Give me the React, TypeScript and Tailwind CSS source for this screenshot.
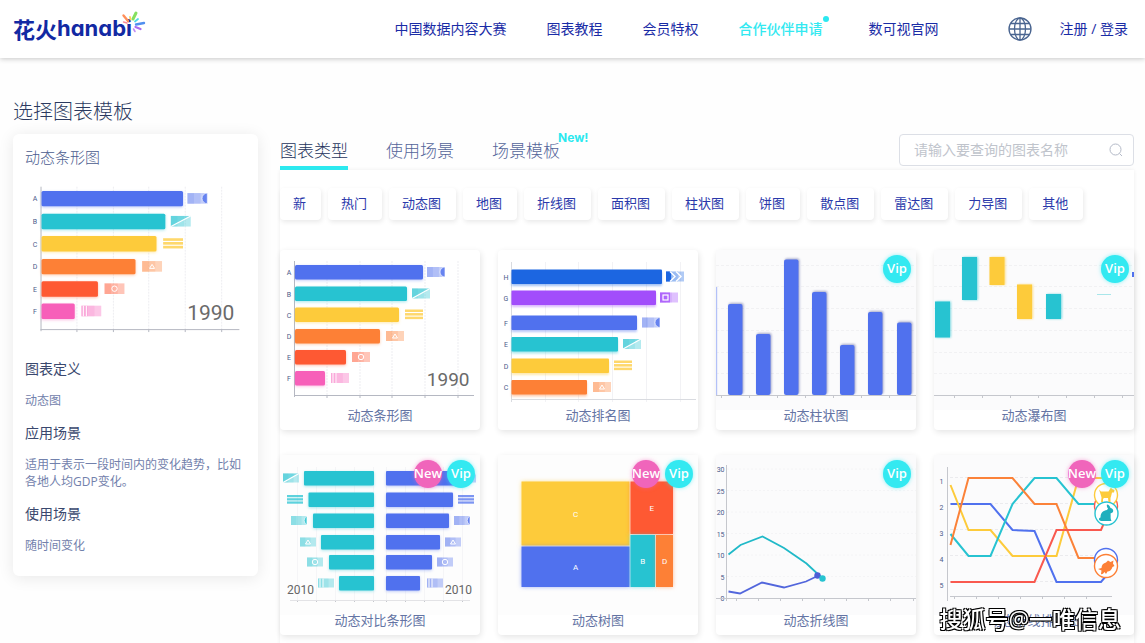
import React, { useState } from "react";

const BLUE = "#5071ee";
const TEAL = "#27c3d1";
const YELLOW = "#fdcb3b";
const ORANGE = "#fd8036";
const RED = "#fe5933";
const PINK = "#f75fb9";

type FlagKind = "moon" | "slash" | "lines" | "triangle" | "circle" | "stripes" | "chevrons" | "square";

interface FlagProps {
  x: number;
  y: number;
  kind: FlagKind;
  color: string;
  w?: number;
  h?: number;
}

// Small gradient flag shown at the end of a bar, centred vertically on y
const Flag: React.FC<FlagProps> = ({ x, y, kind, color, w = 18, h = 10 }) => {
  const top = y - h / 2;
  const cx = x + w / 2;
  return (
    <g>
      {kind !== "lines" && (
        <>
          <rect x={x} y={top} width={w} height={h} fill={color} opacity={0.35} />
          <rect x={x} y={top} width={w * 0.66} height={h} fill={color} opacity={0.15} />
          <rect x={x} y={top} width={w * 0.33} height={h} fill={color} opacity={0.15} />
        </>
      )}
      {kind === "lines" &&
        [0, 1, 2].map((i) => (
          <rect key={i} x={x} y={top + (i * h) / 2.8} width={w} height={h / 4} fill={color} opacity={0.75} />
        ))}
      {kind === "moon" && (
        <path d={`M${x + w} ${top}a5 5 0 0 0 0 ${h}z`} fill={color} stroke="#fff" strokeWidth={0.7} opacity={0.8} />
      )}
      {kind === "slash" && (
        <>
          <path d={`M${x} ${top + h}V${top}H${x + w}z`} fill={color} opacity={0.4} />
          <path d={`M${x} ${top + h}L${x + w} ${top}`} stroke="#fff" strokeWidth={1.2} />
        </>
      )}
      {kind === "triangle" && (
        <path d={`M${cx} ${y - 2}l2.5 4h-5z`} fill="none" stroke="#fff" strokeWidth={1} />
      )}
      {kind === "circle" && <circle cx={cx} cy={y} r={2.7} fill="none" stroke="#fff" strokeWidth={1} />}
      {kind === "stripes" && (
        <path d={`M${x + 2} ${top}v${h}M${x + 5} ${top}v${h}`} stroke="#fff" strokeWidth={1} />
      )}
      {kind === "chevrons" && (
        <>
          <rect x={x} y={top} width={5} height={h} fill={color} />
          <path
            d={`M${x + 4} ${top}l5 ${h / 2}l-5 ${h / 2}M${x + 10} ${top}l5 ${h / 2}l-5 ${h / 2}`}
            fill="none"
            stroke="#fff"
            strokeWidth={1.4}
          />
        </>
      )}
      {kind === "square" && (
        <>
          <rect x={x} y={top} width={10} height={h} fill={color} opacity={0.7} />
          <rect x={x + 3} y={y - 2.5} width={5} height={5} fill="none" stroke="#fff" strokeWidth={1.2} />
        </>
      )}
    </g>
  );
};

interface Bar {
  label: string;
  y: number;
  end: number;
  flag: number;
  color: string;
  kind: FlagKind;
}

const raceBars: Bar[] = [
  { label: "A", y: 15, end: 143, flag: 147, color: BLUE, kind: "moon" },
  { label: "B", y: 36.5, end: 127, flag: 132, color: TEAL, kind: "slash" },
  { label: "C", y: 57.5, end: 119, flag: 125, color: YELLOW, kind: "lines" },
  { label: "D", y: 79, end: 100, flag: 106, color: ORANGE, kind: "triangle" },
  { label: "E", y: 100, end: 66, flag: 72, color: RED, kind: "circle" },
  { label: "F", y: 121, end: 45, flag: 51, color: PINK, kind: "stripes" },
];

const rankBars: Bar[] = [
  { label: "H", y: 19.5, end: 164, flag: 168, color: "#1c66e1", kind: "chevrons" },
  { label: "G", y: 40.5, end: 158, flag: 162, color: "#a24dfb", kind: "square" },
  { label: "F", y: 65.5, end: 139, flag: 144, color: BLUE, kind: "moon" },
  { label: "E", y: 87, end: 120, flag: 125, color: TEAL, kind: "slash" },
  { label: "D", y: 108.5, end: 111, flag: 116, color: YELLOW, kind: "lines" },
  { label: "C", y: 130, end: 89, flag: 95, color: ORANGE, kind: "triangle" },
];

const BarRace: React.FC<{ width?: number; height?: number }> = ({ width = 200, height = 160 }) => {
  const sx = width / 200;
  const sy = height / 160;
  return (
    <svg viewBox={`0 0 ${width} ${height}`} className="block w-full">
      {[47, 80, 112, 145, 178].map((x) => (
        <g key={x}>
          <path d={`M${x * sx} ${11 * sy}V${145 * sy}`} stroke="#ededf1" strokeDasharray="2 1" />
          <path d={`M${x * sx} ${145 * sy}v3`} stroke="#b5b8c2" />
        </g>
      ))}
      <path d={`M${14.5 * sx} ${11 * sy}V${147 * sy}M${14 * sx} ${145.5 * sy}H${194 * sx}`} stroke="#b5b8c2" />
      {raceBars.map((b) => (
        <g key={b.label}>
          <text
            x={9 * sx}
            y={(b.y + 7) * sy + 3}
            textAnchor="middle"
            fontSize={7}
            fill="#4a5a8a"
            fontWeight={400}
            fontFamily="Roboto, sans-serif"
          >
            {b.label}
          </text>
          <rect
            x={15 * sx}
            y={b.y * sy}
            width={(b.end - 15) * sx}
            height={14.5 * sy}
            rx={1.5}
            fill={b.color}
            style={{ filter: `drop-shadow(0 1px 1.5px ${b.color}66)` }}
          />
          <Flag x={b.flag * sx} y={(b.y + 7) * sy} w={18 * sx} h={10 * sy} kind={b.kind} color={b.color} />
        </g>
      ))}
      <text
        x={189.5 * sx}
        y={136 * sy}
        textAnchor="end"
        fontSize={width > 200 ? 21 : 19}
        fontWeight={400}
        fill="#6a6a6a"
        fontFamily="Roboto, sans-serif"
      >
        1990
      </text>
    </svg>
  );
};

const Ranking: React.FC = () => (
  <svg viewBox="0 0 200 160" className="block w-full">
    {[47, 80, 114, 148, 182].map((x) => (
      <path key={x} d={`M${x + 0.5} 12v140`} stroke="#f2f2f5" />
    ))}
    <path d="M13.5 12v140M13 149.5h185" stroke="#d9dbe0" />
    {rankBars.map((b) => (
      <g key={b.label}>
        <text
          x={8}
          y={b.y + 10}
          textAnchor="middle"
          fontSize={7}
          fontWeight={400}
          fill="#4a5a8a"
          fontFamily="Roboto, sans-serif"
        >
          {b.label}
        </text>
        <rect
          x={13.5}
          y={b.y}
          width={b.end - 13.5}
          height={14.5}
          rx={1}
          fill={b.color}
          style={{ filter: `drop-shadow(0 2px 1px ${b.color}66)` }}
        />
        <Flag x={b.flag} y={b.y + 7} kind={b.kind} color={b.color} />
      </g>
    ))}
  </svg>
);

const gridRows = [15.5, 36.5, 58.5, 80.5, 102.5, 123.5];

const ColumnChart: React.FC = () => (
  <svg viewBox="0 0 200 160" className="block w-full bg-[#fbfbfc]">
    {gridRows.map((y) => (
      <path key={y} d={`M0 ${y}h200`} stroke="#f1f1f3" strokeDasharray="3 2" />
    ))}
    <rect x={0} y={37} width={1.2} height={108} fill="#b3c1f8" />
    {[
      [12, 54],
      [40, 84],
      [68, 9.5],
      [96, 42],
      [124, 95],
      [152, 62],
      [181, 72.5],
    ].map(([x, y]) => (
      <rect
        key={x}
        x={x}
        y={y}
        width={14.5}
        height={145 - y}
        rx={2}
        fill={BLUE}
        style={{ filter: "drop-shadow(1px -1px 1px #5a62a088)" }}
      />
    ))}
    <path d="M0 145.5h200" stroke="#c5c7cd" />
    {[5, 33, 61, 89, 117, 145, 173].map((x) => (
      <path key={x} d={`M${x + 0.5} 145v3`} stroke="#c5c7cd" />
    ))}
  </svg>
);

const Waterfall: React.FC = () => (
  <svg viewBox="0 0 200 160" className="block w-full bg-[#fbfbfc]">
    {gridRows.map((y) => (
      <path key={y} d={`M0 ${y}h200`} stroke="#f1f1f3" strokeDasharray="3 2" />
    ))}
    {[
      { x: 1, y: 51.5, h: 36, color: TEAL },
      { x: 28, y: 7, h: 43, color: TEAL },
      { x: 55.5, y: 7, h: 28, color: YELLOW },
      { x: 83, y: 34.5, h: 34.5, color: YELLOW },
      { x: 112, y: 44, h: 25, color: TEAL },
    ].map((r) => (
      <rect
        key={r.x}
        x={r.x}
        y={r.y}
        width={15}
        height={r.h}
        fill={r.color}
        style={{ filter: `drop-shadow(1px 0 1px ${r.color}99)` }}
      />
    ))}
    <path d="M163 44.5h14" stroke="#a8e6ea" />
    <rect x={198} y={22} width={2} height={5} fill={BLUE} />
    <path d="M0 145.5h200" stroke="#c5c7cd" />
    {[20, 48, 76, 104, 132, 160, 188].map((x) => (
      <path key={x} d={`M${x + 0.5} 145v3`} stroke="#c5c7cd" />
    ))}
  </svg>
);

const compareRows: { y: number; left: number; right: number; lf: number; rf: number; kind: FlagKind }[] = [
  { y: 16, left: 24, right: 175, lf: 3, rf: 180, kind: "slash" },
  { y: 37.5, left: 28.5, right: 173, lf: 7, rf: 178, kind: "lines" },
  { y: 58.5, left: 33, right: 169, lf: 11, rf: 174, kind: "moon" },
  { y: 80, left: 41, right: 160, lf: 20, rf: 165, kind: "triangle" },
  { y: 100, left: 49, right: 152, lf: 27, rf: 157, kind: "circle" },
  { y: 121, left: 59, right: 140, lf: 38, rf: 147, kind: "stripes" },
];

const CompareBars: React.FC = () => (
  <svg viewBox="0 0 200 160" className="block w-full bg-[#fdfdfd]">
    {[17, 36, 55, 74, 93, 106, 125, 144, 163, 182].map((x) => (
      <g key={x}>
        <path d={`M${x + 0.5} 12v133`} stroke="#f5f5f7" />
        <path d={`M${x + 0.5} 145v2`} stroke="#c5c7cd" />
      </g>
    ))}
    <path d="M10 145.5h180" stroke="#e3e3e6" />
    {compareRows.map((r) => (
      <g key={r.y}>
        <rect
          x={r.left}
          y={r.y}
          width={94 - r.left}
          height={14.5}
          rx={1}
          fill={TEAL}
          style={{ filter: "drop-shadow(0 1px 1.5px #27c3d166)" }}
        />
        <rect
          x={106}
          y={r.y}
          width={r.right - 106}
          height={14.5}
          rx={1}
          fill={BLUE}
          style={{ filter: "drop-shadow(0 1px 1.5px #5071ee66)" }}
        />
        <Flag x={r.lf} y={r.y + 7} w={16} h={9} kind={r.kind} color={TEAL} />
        <Flag x={r.rf} y={r.y + 7} w={16} h={9} kind={r.kind} color={BLUE} />
      </g>
    ))}
    <g fontSize={12} fontWeight={400} fill="#666" fontFamily="Roboto, sans-serif">
      <text x={7} y={139}>
        2010
      </text>
      <text x={165} y={139}>
        2010
      </text>
    </g>
  </svg>
);

const TreeMap: React.FC = () => (
  <svg viewBox="0 0 200 160" className="block w-full bg-[#fdfdfd]">
    {[
      { label: "C", x: 23.5, y: 26.5, w: 108, h: 64, color: YELLOW },
      { label: "A", x: 23.5, y: 91.5, w: 108, h: 40.5, color: BLUE },
      { label: "E", x: 132.5, y: 26.5, w: 42.5, h: 52.5, color: RED },
      { label: "B", x: 132.5, y: 80, w: 24.5, h: 52, color: TEAL },
      { label: "D", x: 158, y: 80, w: 17, h: 52, color: ORANGE },
    ].map((c) => (
      <g key={c.label}>
        <rect
          x={c.x}
          y={c.y}
          width={c.w}
          height={c.h}
          fill={c.color}
          style={{ filter: `drop-shadow(0 0 2px ${c.color}88)` }}
        />
        <text
          x={c.x + c.w / 2}
          y={c.y + c.h / 2 + 3}
          textAnchor="middle"
          fontSize={8}
          fontWeight={400}
          fill="#fff"
          fontFamily="Roboto, sans-serif"
        >
          {c.label}
        </text>
      </g>
    ))}
  </svg>
);

const LineChart: React.FC = () => (
  <svg viewBox="0 0 200 160" className="block w-full bg-[#fbfbfc]">
    {[30, 25, 20, 15, 10, 5, 0].map((v, i) => {
      const y = 14 + i * 21.5;
      return (
        <g key={v}>
          <text
            x={8.5}
            y={y + 3}
            textAnchor="end"
            fontSize={7}
            fontWeight={400}
            fill="#4a5a8a"
            fontFamily="Roboto, sans-serif"
          >
            {v}
          </text>
          {v > 0 && <path d={`M11 ${y}h189`} stroke="#f4f4f6" strokeDasharray="2 2" />}
        </g>
      );
    })}
    <path d="M10.5 10v136M0 143.5h200" stroke="#c5c7cd" />
    {[20, 42, 64, 86, 108, 130, 152, 174, 197].map((x) => (
      <path key={x} d={`M${x + 0.5} 143v3`} stroke="#c5c7cd" />
    ))}
    <path
      d="M12.5 136.5L24 138.5L46 127.5L68 132.5L90 126.5L101.5 121"
      fill="none"
      stroke="#5266dc"
      strokeWidth={1.8}
    />
    <path d="M12.5 99.5L24.5 90L46.5 81.5L68 93L90.5 108.5L106 123" fill="none" stroke="#20b9c8" strokeWidth={1.8} />
    <circle cx={101.5} cy={120.5} r={3.2} fill="#4d5fd6" />
    <circle cx={106.5} cy={123.5} r={3.2} fill={TEAL} />
  </svg>
);

const LineRank: React.FC = () => (
  <svg viewBox="0 0 200 160" className="block w-full bg-[#fbfbfc]">
    {[1, 2, 3, 4, 5].map((n) => (
      <g key={n}>
        <path d={`M16 ${-3.5 + n * 26}h150`} stroke="#ebebee" strokeDasharray="3 2" />
        <text
          x={7.5}
          y={2.5 + n * 26}
          textAnchor="middle"
          fontSize={7}
          fontWeight={400}
          fill="#4a5a8a"
          fontFamily="Roboto, sans-serif"
        >
          {n}
        </text>
      </g>
    ))}
    <path d="M13.5 12v134M16 141.5h162" stroke="#c5c7cd" />
    {[20, 42, 64, 86, 108, 130, 152].map((x) => (
      <path key={x} d={`M${x + 0.5} 141v3`} stroke="#c5c7cd" />
    ))}
    <g fill="none" strokeWidth={2}>
      <path d="M16.5 49H56.5L78.5 75L100.5 76L122.5 127H167L172 121" stroke={BLUE} />
      <path d="M16.5 30L34.5 75H56.5L78.5 101H122.5L144.5 23H172" stroke={YELLOW} />
      <path d="M16.5 79L34.5 101H56.5L78.5 49L100.5 23H122.5L144.5 49H162" stroke={TEAL} />
      <path d="M16.5 90L34.5 23H78.5L100.5 49H122.5L144.5 103H162" stroke="#fb8239" />
      <path d="M16.5 127H100.5L122.5 75H167L170 68" stroke="#f9594f" />
    </g>
    <g fill="#fff" strokeWidth={1.4}>
      <circle cx={172} cy={51} r={11.5} stroke="#f9594f" />
      <circle cx={172} cy={40} r={11.5} stroke={YELLOW} />
      <circle cx={172.5} cy={58.5} r={11.5} stroke={TEAL} />
      <circle cx={172} cy={105} r={11.5} stroke={BLUE} />
      <circle cx={172} cy={111} r={11.5} stroke={ORANGE} />
    </g>
    {/* dog */}
    <path
      d="M165 34.5l2 2h7.500l1.500-2.500 1-1.500 1 1.500 2.500 1-.5 2.500h-2l-1 4-.5 1.500v4h-2l-.5-4h-4l-1 1v3H167l.5-4.500-1-3.500z"
      fill={YELLOW}
    />
    {/* rabbit */}
    <path
      d="M173 49.500c2 0 3 2 3.500 3.500 2.500.5 3.500 2.500 2 4.500l-2 1c.5 3-.5 4.500 1 7.500H167.500c-3.500-.5-3-3-1-3.500 0-5 3-7 6.500-7.500l1-1.500c-1-1-1.500-2.500-1-4z"
      fill="#20afbd"
    />
    {/* fish */}
    <path
      d="M164 114l3.500-1c0-3 2-5 4.500-5.500l2-2 2.500 1.500 3-1.500-.5 3 1.500 2.500-2 1c-1 3-3 4.500-5 4.500l-1.500 2.500-1.500-2c-1.500 2-2.500 2.500-3.500 2l.5-3.500z"
      fill={ORANGE}
    />
  </svg>
);

const Logo: React.FC = () => (
  <a href="#home" aria-label="花火hanabi" className="relative flex h-12 items-center text-[#1229a3]">
    <span className="font-['Noto_Sans_CJK_SC',sans-serif] text-[22px] font-bold">花火</span>
    <span className="font-['Inter',sans-serif] text-[22px] font-bold [font-feature-settings:'cv11']">hanabi</span>
    <svg viewBox="0 0 28 28" className="absolute right-[-14px] top-1 h-7 w-7">
      <g strokeLinecap="round" fill="none">
        <path d="M10 12L5.500 6.500" stroke="#ff8f5a" strokeWidth={2.400} />
        <path d="M12.500 10.500L12 8" stroke="#ffd35a" strokeWidth={1.800} />
        <path d="M15 10L18 4" stroke="#86e05f" strokeWidth={3} />
        <path d="M17 12.500L20 10" stroke="#4fd9e6" strokeWidth={1.800} />
        <path d="M18 15.500L26 14" stroke="#4f8ff0" strokeWidth={2.400} />
        <path d="M17.500 18L22.500 20" stroke="#a96bf0" strokeWidth={2.200} />
        <path d="M15.500 20L17 22.500" stroke="#c08bf3" strokeWidth={1.600} />
        <path d="M9 14L5.500 13" stroke="#f98a9a" strokeWidth={1.400} />
      </g>
    </svg>
  </a>
);

const GlobeIcon: React.FC = () => (
  <svg viewBox="0 0 24 24" className="h-6 w-6" fill="none" stroke="#4a6590" strokeWidth={1.3}>
    <circle cx={12} cy={12} r={11} />
    <ellipse cx={12} cy={12} rx={5.500} ry={11} />
    <path d="M12 1v22M1 12h22M3 6.500h18M3 17.500h18" />
  </svg>
);

const navLinks = ["中国数据内容大赛", "图表教程", "会员特权", "合作伙伴申请", "数可视官网"];

const tabs = ["图表类型", "使用场景", "场景模板"];

const filters = ["新", "热门", "动态图", "地图", "折线图", "面积图", "柱状图", "饼图", "散点图", "雷达图", "力导图", "其他"];

const templates = [
  { name: "动态条形图", chart: <BarRace />, isNew: false, vip: false },
  { name: "动态排名图", chart: <Ranking />, isNew: false, vip: false },
  { name: "动态柱状图", chart: <ColumnChart />, isNew: false, vip: true },
  { name: "动态瀑布图", chart: <Waterfall />, isNew: false, vip: true },
  { name: "动态对比条形图", chart: <CompareBars />, isNew: true, vip: true },
  { name: "动态树图", chart: <TreeMap />, isNew: true, vip: true },
  { name: "动态折线图", chart: <LineChart />, isNew: false, vip: true },
  { name: "动态折线排名图", chart: <LineRank />, isNew: true, vip: true },
];

const details = [
  { title: "图表定义", text: "动态图" },
  { title: "应用场景", text: "适用于表示一段时间内的变化趋势，比如各地人均GDP变化。" },
  { title: "使用场景", text: "随时间变化" },
];

const App: React.FC = () => {
  const [activeTab, setActiveTab] = useState(tabs[0]);
  const [query, setQuery] = useState("");

  return (
    <div className="relative min-h-screen overflow-hidden bg-[#fefefe] font-['Open_Sans','Noto_Sans_CJK_SC',sans-serif] font-light">
      {/* Header */}
      <header className="flex h-[58px] items-center bg-white pl-[13px] pr-[17px] text-sm font-normal text-[#1a2ca6] shadow-[0_1px_5px_rgba(0,0,0,0.22)]">
        <Logo />
        <nav className="ml-auto flex gap-10 whitespace-nowrap">
          {navLinks.map((link) =>
            link === "合作伙伴申请" ? (
              <a key={link} href="#partner" className="relative pr-1.5 font-medium text-[#33e9f1]">
                {link}
                <span className="absolute right-0 top-[-3px] h-1.5 w-1.5 rounded-full bg-[#2be8f0]"></span>
              </a>
            ) : (
              <a key={link} href="#nav">
                {link}
              </a>
            )
          )}
        </nav>
        <button type="button" aria-label="语言" className="ml-[69px]">
          <GlobeIcon />
        </button>
        <a href="#login" className="ml-7 whitespace-nowrap">
          注册 / 登录
        </a>
      </header>

      <main className="pl-[13px] pr-[11px] pt-10">
        <h1 className="mb-2 text-xl leading-7 text-[#2b3a60]">选择图表模板</h1>

        <div className="flex items-start gap-[22px]">
          {/* Selected template */}
          <aside className="w-[245px] shrink-0 rounded-md bg-white px-3 pb-[22px] pt-3 shadow-[0_2px_16px_rgba(0,0,0,0.09)]">
            <h2 className="mb-[7px] text-[15px] leading-[22px] text-[#4a5b8e]">动态条形图</h2>
            <BarRace width={221} height={170} />
            {details.map((d) => (
              <section key={d.title} className="mt-3.5 font-normal">
                <h3 className="text-sm leading-5 text-[#3a486e]">{d.title}</h3>
                <p className="mt-[13px] text-xs leading-[17px] text-[#7281ac]">{d.text}</p>
              </section>
            ))}
          </aside>

          {/* Template browser */}
          <section className="min-w-0 flex-1">
            <div className="flex h-9 items-start">
              <div role="tablist" className="flex h-9 gap-[38px]">
                {tabs.map((tab) => (
                  <button
                    key={tab}
                    type="button"
                    role="tab"
                    aria-selected={activeTab === tab}
                    onClick={() => setActiveTab(tab)}
                    className={`relative h-9 border-b-4 pt-0.5 text-[17px] ${
                      activeTab === tab ? "border-[#2ce9ef] text-[#25345c]" : "border-transparent text-[#54659a]"
                    }`}
                  >
                    {tab}
                    {tab === "场景模板" && (
                      <span className="absolute left-[66px] top-[-4px] font-['Inter',sans-serif] text-xs font-bold text-[#2ce9ef]">
                        New!
                      </span>
                    )}
                  </button>
                ))}
              </div>
              <div className="ml-auto flex h-8 w-[235px] items-center rounded border border-[#dcdfe6] bg-white pl-3.5 pr-2.5">
                <input
                  type="text"
                  aria-label="搜索图表"
                  value={query}
                  onChange={(e) => setQuery(e.target.value)}
                  placeholder="请输入要查询的图表名称"
                  className="min-w-0 flex-1 text-sm font-normal text-[#34446a] outline-none placeholder:text-[#c0c4cc]"
                />
                <svg viewBox="0 0 14 14" className="h-3.5 w-3.5" fill="none" stroke="#b4bac8">
                  <circle cx={6.500} cy={6.500} r={5.500} />
                  <path d="M10.500 10.500l2.500 2.500" />
                </svg>
              </div>
            </div>

            <div className="bg-white pb-10 pt-[18px] shadow-[0_0_4px_rgba(0,0,0,0.07)]">
              <div className="flex flex-wrap gap-[7px]">
                {filters.map((f) => (
                  <button
                    key={f}
                    type="button"
                    className="h-8 rounded bg-white pl-[13px] pr-[15px] text-[13px] font-normal text-[#2a39ab] shadow-[1px_2px_5px_rgba(0,0,0,0.09)]"
                  >
                    {f}
                  </button>
                ))}
              </div>

              <div className="mt-[30px] grid grid-cols-4 gap-x-[18px] gap-y-[25px]">
                {templates.map((t) => (
                  <a
                    key={t.name}
                    href="#template"
                    className="relative block rounded bg-white shadow-[1px_2px_6px_rgba(0,0,0,0.11)]"
                  >
                    {t.chart}
                    <span className="block h-5 text-center text-[13px] leading-[11px] font-normal text-[#6474a4]">
                      {t.name}
                    </span>
                    {(t.isNew || t.vip) && (
                      <span className="absolute right-[5px] top-[5px] flex gap-[5px] text-[13px] font-semibold text-white">
                        {t.isNew && (
                          <span className="flex h-7 w-7 items-center justify-center rounded-full bg-[#f065bb] shadow-[0_0_4px_#f065bb88]">
                            New
                          </span>
                        )}
                        {t.vip && (
                          <span className="flex h-7 w-7 items-center justify-center rounded-full bg-[#33e9f1] shadow-[0_0_4px_#33e9f188]">
                            Vip
                          </span>
                        )}
                      </span>
                    )}
                  </a>
                ))}
              </div>
            </div>
          </section>
        </div>
      </main>

      {/* Source credit over the page corner */}
      <div className="fixed bottom-2 right-6 whitespace-nowrap text-[23px] leading-8 font-medium text-white [text-shadow:-1px_-1px_0_#000,1px_-1px_0_#000,-1px_1px_0_#000,1px_1px_0_#000]">
        搜狐号@一唯信息
      </div>
    </div>
  );
};

export default App;
